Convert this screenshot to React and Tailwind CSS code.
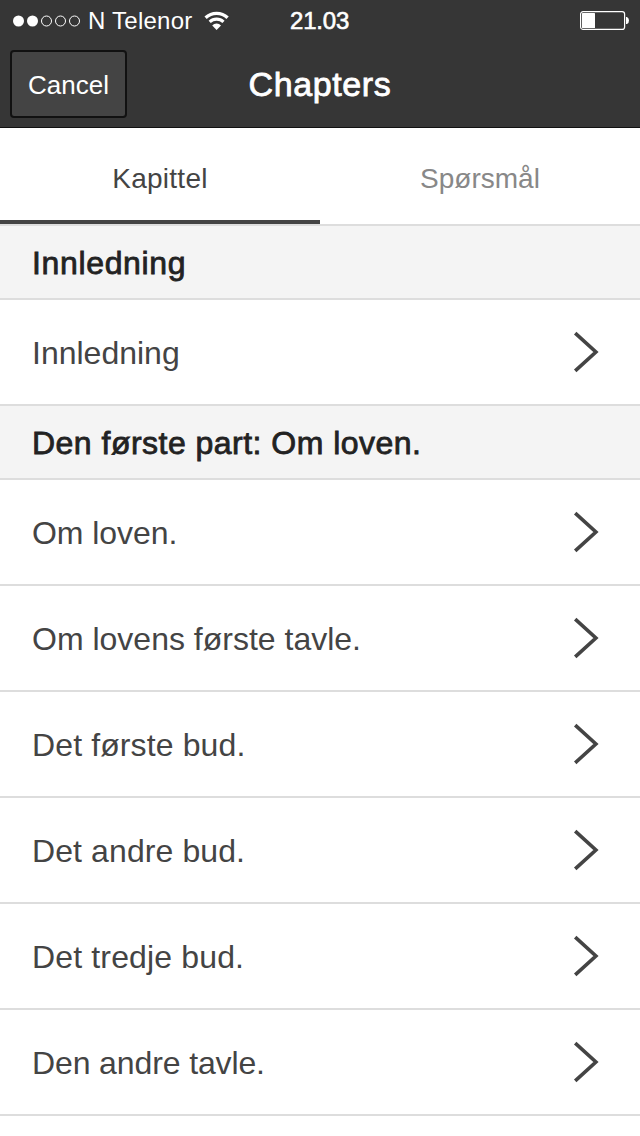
import { useState } from "react";

const TABS = [
  { label: "Kapittel", className: "tracking-[0.25px]" },
  { label: "Spørsmål", className: "tracking-normal" },
];

const SECTIONS = [
  {
    title: "Innledning",
    titleClass: "tracking-[0.65px]",
    items: [{ label: "Innledning", className: "tracking-normal" }],
  },
  {
    title: "Den første part: Om loven.",
    titleClass: "tracking-[0.48px]",
    items: [
      { label: "Om loven.", className: "tracking-[-0.05px]" },
      { label: "Om lovens første tavle.", className: "tracking-normal" },
      { label: "Det første bud.", className: "tracking-[0.12px]" },
      { label: "Det andre bud.", className: "tracking-[0.1px]" },
      { label: "Det tredje bud.", className: "tracking-[0.15px]" },
      { label: "Den andre tavle.", className: "tracking-[-0.12px]" },
    ],
  },
];

function SignalDots() {
  return (
    <svg width="68" height="12" viewBox="0 0 68 12" className="shrink-0">
      {[0, 1, 2, 3, 4].map(i => (
        <circle key={i} cx={5.5 + i * 14} cy="6" r={i < 2 ? 5.5 : 5} fill={i < 2 ? "#fff" : "none"} stroke={i < 2 ? "none" : "#fff"} />
      ))}
    </svg>
  );
}

function WifiIcon() {
  return (
    <svg width="26" height="20" viewBox="0 0 26 20" fill="none" stroke="#fff" className="shrink-0">
      <path d="M1.600 6.700a15.900 15.900 0 0 1 22 0" strokeWidth="3.300" />
      <path d="M5.700 10.900a9.900 9.900 0 0 1 13.800 0" strokeWidth="3.100" />
      <path d="M12.600 18.900l-4.400-4.500a6.200 6.200 0 0 1 8.800 0z" fill="#fff" stroke="none" />
    </svg>
  );
}

function BatteryIcon() {
  return (
    <svg width="50" height="20" viewBox="0 0 50 20" className="shrink-0">
      <rect x="0.6" y="0.6" width="44" height="17.800" rx="2.5" fill="none" stroke="#fff" strokeWidth="1.200" />
      <rect x="2" y="2" width="13" height="15" rx="0.5" fill="#fff" />
      <path d="M46 6h1q2 1 2 3.500t-2 3.500h-1z" fill="#fff" />
    </svg>
  );
}

function StatusBar() {
  return (
    <div className="grid grid-cols-[290px_1fr_60px] h-[42px] items-center text-2xl text-white">
      <div className="flex items-center pl-[13px]">
        <SignalDots />
        <span className="ml-[7px] tracking-[0.25px]">N Telenor</span>
        <span className="ml-[11px]"><WifiIcon /></span>
      </div>
      <span className="tracking-[-0.2px] [-webkit-text-stroke:0.6px_#fff]">21.03</span>
      <BatteryIcon />
    </div>
  );
}

function Chevron() {
  return (
    <svg width="28" height="42" viewBox="0 0 28 42" fill="none" stroke="#444" strokeWidth="3.6" className="shrink-0">
      <path d="M4.200 2.200l20.700 18.800L4.200 39.800" />
    </svg>
  );
}

export default function App() {
  const [tab, setTab] = useState(0);

  return (
    <div className="w-[640px] h-[1136px] overflow-hidden bg-white font-['Liberation_Sans',Arial,sans-serif]">
      <header className="h-32 bg-[#363636] border-b border-[#111] flex flex-col">
        <StatusBar />
        <div className="grid grid-cols-[1fr_auto_1fr] items-center px-2.5 pt-2">
          <button className="justify-self-start w-[117px] h-[68px] rounded-[4px] border-2 border-[#111] bg-[#444] text-white text-[26px] leading-none pt-0.5">
            Cancel
          </button>
          <h1 className="text-[34px] leading-none tracking-[0.6px] text-white [-webkit-text-stroke:0.8px_#fff]">Chapters</h1>
        </div>
      </header>

      <nav className="h-[98px] flex border-b-2 border-[#ddd]">
        {TABS.map((t, i) => (
          <button
            key={t.label}
            onClick={() => setTab(i)}
            className={`flex-1 border-b-4 pt-2.5 text-[28px] leading-none ${tab === i ? "border-[#444] text-[#444]" : "border-transparent text-[#888]"}`}
          >
            <span className={t.className}>{t.label}</span>
          </button>
        ))}
      </nav>

      {SECTIONS.map(section => (
        <section key={section.title}>
          <h2 className="h-[74px] flex items-center px-8 pt-0.5 bg-[#f4f4f4] border-b-2 border-[#ddd] text-[32px] text-[#222] [-webkit-text-stroke:0.8px_#222]">
            <span className={section.titleClass}>{section.title}</span>
          </h2>
          <ul>
            {section.items.map(item => (
              <li key={item.label} className="h-[106px] flex items-center justify-between pl-8 pr-[41px] border-b-2 border-[#ddd] text-[32px] text-[#444]">
                <span className={`pt-0.5 ${item.className}`}>{item.label}</span>
                <Chevron />
              </li>
            ))}
          </ul>
        </section>
      ))}
    </div>
  );
}
